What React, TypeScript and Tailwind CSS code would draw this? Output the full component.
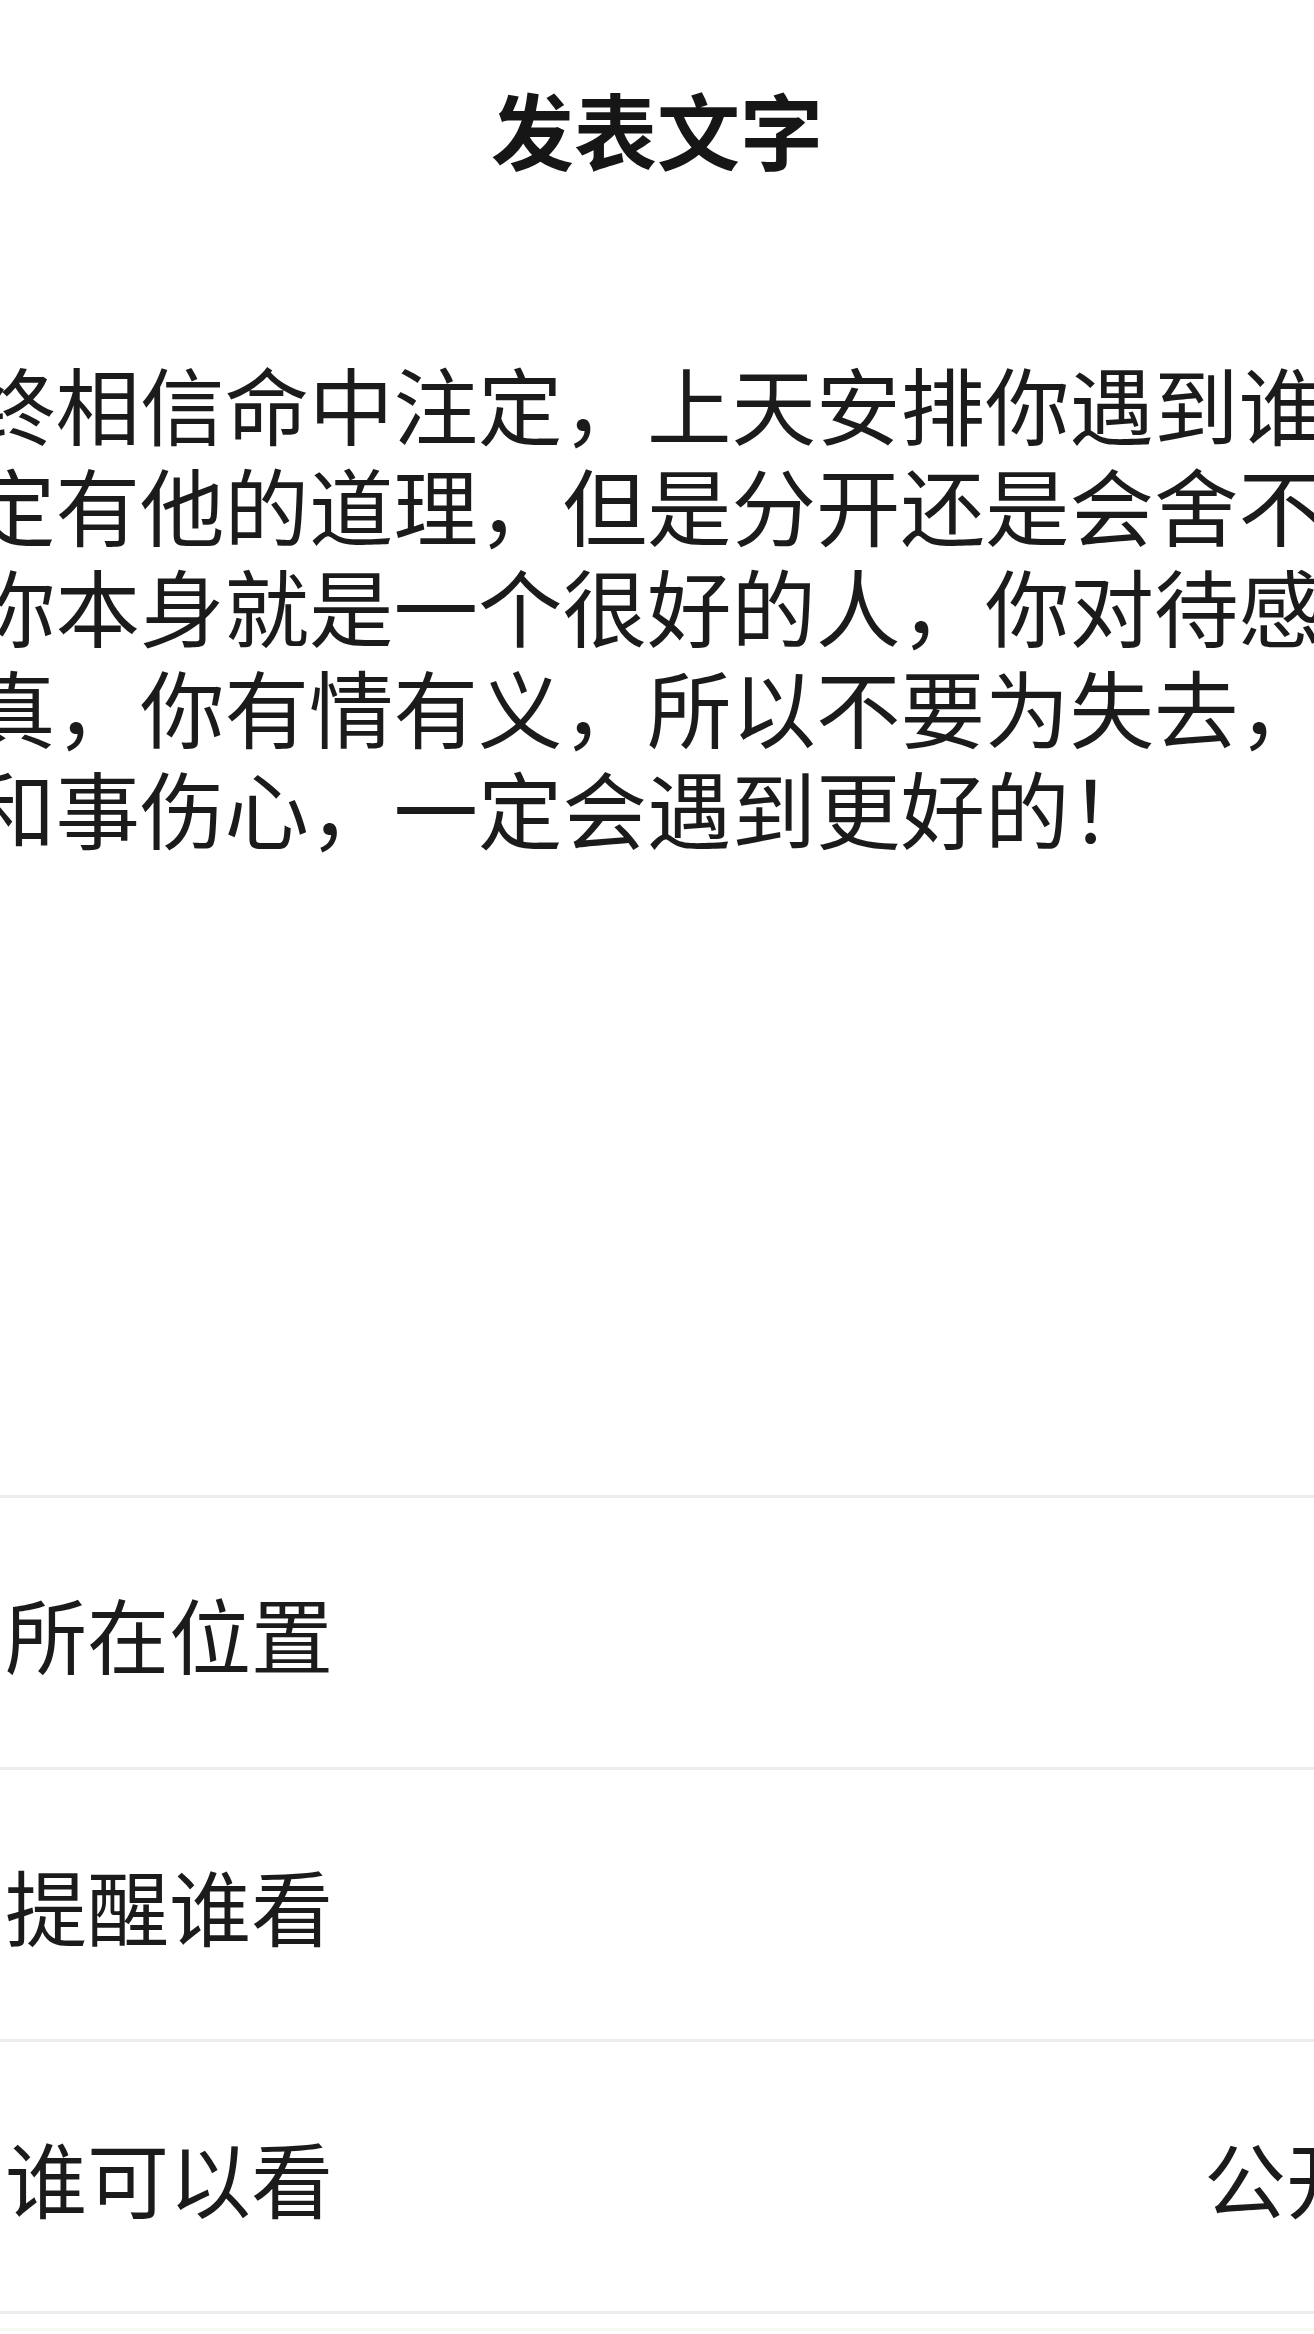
import React from "react";

const lines = [
  "终相信命中注定，上天安排你遇到谁",
  "定有他的道理，但是分开还是会舍不",
  "你本身就是一个很好的人，你对待感",
  "真，你有情有义，所以不要为失去，",
  "和事伤心，一定会遇到更好的！",
];

function Row({ label, value }: { label: string; value?: string }) {
  return (
    <div className="flex h-[272px] items-center border-t-[3px] border-[#ececec]">
      <span className="pl-[5px] text-[82px] leading-none text-[#1b1b1b]">{label}</span>
      {value ? (
        <span className="ml-auto mr-[-54px] shrink-0 text-[82px] leading-none text-[#1b1b1b]">
          {value}
        </span>
      ) : null}
    </div>
  );
}

export default function App() {
  return (
    <div
      className="flex h-[2334px] w-[1314px] flex-col overflow-hidden bg-white"
      style={{ fontFamily: '"Noto Sans CJK SC", "Noto Sans", sans-serif' }}
    >
      <header className="flex h-[256px] shrink-0 items-center justify-center">
        <h1 className="text-[83px] font-bold leading-none text-[#161616]">发表文字</h1>
      </header>

      <div className="mt-[96px] ml-[-29px] text-[84.5px] leading-[101px] text-[#1b1b1b]">
        {lines.map((l, i) => (
          <div key={i} className="whitespace-nowrap">
            {l}
          </div>
        ))}
      </div>

      <div className="mt-auto flex flex-col">
        <Row label="所在位置" />
        <Row label="提醒谁看" />
        <Row label="谁可以看" value="公开" />
        <div className="h-[23px] border-t-[3px] border-[#ececec] bg-white">
          <div className="mt-[14px] h-[3px] bg-[#f5fbf3]" />
        </div>
      </div>
    </div>
  );
}
